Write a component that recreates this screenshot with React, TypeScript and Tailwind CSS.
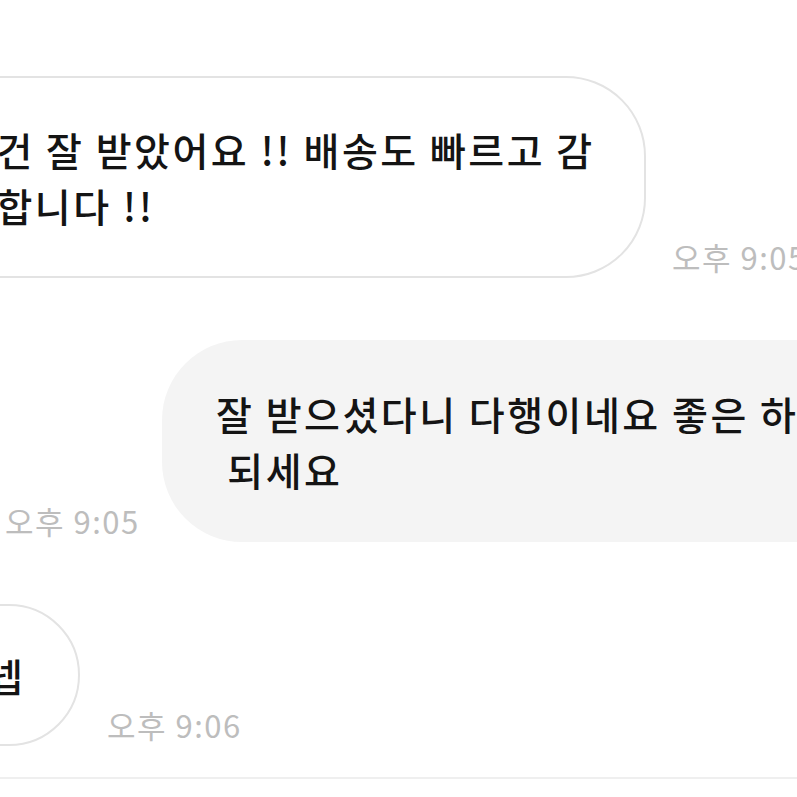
const font = { fontFamily: '"Noto Sans CJK KR", "Noto Sans", sans-serif' }

const Time = ({ children, className = '' }: { children: string; className?: string }) => (
  <span className={`mb-[4px] shrink-0 whitespace-nowrap text-[31px] leading-[34px] tracking-[1.5px] text-[#bdbdbd] ${className}`}>
    {children}
  </span>
)

const bubbleText = 'text-[39px] leading-[56px] font-medium tracking-[2.5px] whitespace-pre'

export default function App() {
  return (
    <div
      className="flex h-[797px] w-[797px] flex-col overflow-hidden bg-white pt-[76px] text-[#141414]"
      style={font}
    >
      <div className="flex items-end">
        <div className={`ml-[-97px] w-[743px] shrink-0 rounded-[80px] border-2 border-[#e3e3e3] bg-white px-[53px] py-[43px] ${bubbleText}`}>
          물건 잘 받았어요 !! 배송도 빠르고 감{'\n'}사합니다 !!
        </div>
        <Time className="ml-[26px]">오후 9:05</Time>
      </div>

      <div className="mt-[62px] flex items-end">
        <Time className="w-[162px] pl-[5px]">오후 9:05</Time>
        <div className={`w-[760px] shrink-0 rounded-[80px] bg-[#f4f4f4] px-[54px] py-[45px] ${bubbleText}`}>
          잘 받으셨다니 다행이네요 좋은 하루{'\n'} 되세요
        </div>
      </div>

      <div className="mt-[62px] flex items-end">
        <div className={`ml-[-68px] w-[148px] shrink-0 rounded-[72px] border-2 border-[#e3e3e3] bg-white px-[53px] py-[41px] ${bubbleText}`}>
          넵
        </div>
        <Time className="ml-[27px]">오후 9:06</Time>
      </div>

      <div className="mt-[31px] border-t-2 border-[#efefef]" />
    </div>
  )
}
